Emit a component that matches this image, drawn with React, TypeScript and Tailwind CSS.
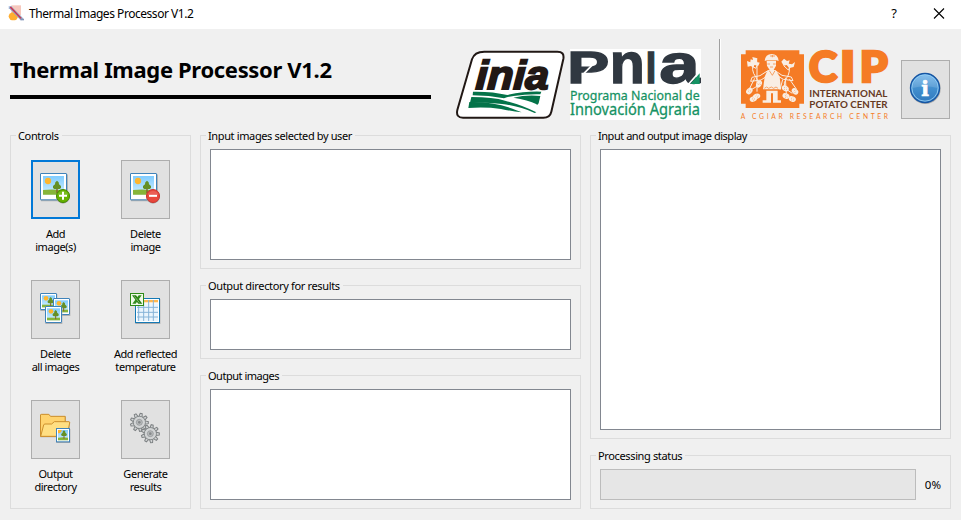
import type { ReactNode } from "react";

const UI = "font-['Noto_Sans','DejaVu_Sans',sans-serif]";

function Group({ title, tracking, className, children }: { title: string; tracking: string; className: string; children: ReactNode }) {
  return (
    <section className={`flex flex-col border border-[#dcdcdc] ${className}`}>
      <h2 className={`-mt-[7px] ml-[5px] h-[13px] self-start whitespace-nowrap bg-[#f0f0f0] pl-[2px] pr-[3px] text-[11px] leading-[13px] ${tracking}`}>{title}</h2>
      {children}
    </section>
  );
}

function ListBox() {
  return <div className="mx-[9px] mb-2 mt-[7px] flex-1 border border-[#828790] bg-white" />;
}

function IconButton({ focused, children }: { focused?: boolean; children: ReactNode }) {
  return (
    <button className={`block h-[59px] w-[49px] shrink-0 bg-[#e1e1e1] ${focused ? "shadow-[inset_0_0_0_2px_#0078d7]" : "shadow-[inset_0_0_0_1px_#adadad]"}`}>
      <svg width="49" height="59" viewBox="0 0 147 177">{children}</svg>
    </button>
  );
}

function Control({ lines, focused, children }: { lines: [string, string]; focused?: boolean; children: ReactNode }) {
  return (
    <div className="flex h-[120px] flex-col items-center">
      <IconButton focused={focused}>{children}</IconButton>
      <div className="mt-2 whitespace-nowrap text-center text-[11px] leading-[13px] tracking-[-0.45px]">
        {lines[0]}
        <br />
        {lines[1]}
      </div>
    </div>
  );
}

function Tree({ x, y, s }: { x: number; y: number; s: number }) {
  return (
    <g transform={`translate(${x} ${y}) scale(${s})`}>
      <path d="M-2 8h4v17h-4z" fill="#855b2c" />
      <path d="M0-12l5 5 1 6 6 5v6l-4 3H-8l-4-3V4l6-5 1-6z" fill="#659026" />
    </g>
  );
}

function Photo() {
  return (
    <g>
      <rect x="30" y="43" width="81" height="81" rx="2" fill="#b3b3b3" />
      <rect x="28.500" y="40.500" width="78" height="79" rx="1" fill="#fff" stroke="#3f83ba" strokeWidth="3" />
      <rect x="36" y="48" width="63" height="56" fill="url(#sky)" />
      <path d="M36 90q30-3 63 1v13H36z" fill="#86b53a" />
      <circle cx="51" cy="63" r="9.500" fill="#ffb62e" />
      <Tree x={78} y={74} s={1} />
    </g>
  );
}

function MiniPhoto({ x, y }: { x: number; y: number }) {
  return (
    <g transform={`translate(${x} ${y})`}>
      <rect x="1" y="3" width="51" height="51" fill="#b0b0b0" />
      <rect x="1.500" y="1.500" width="48" height="48" rx="1" fill="#fff" stroke="#3f83ba" strokeWidth="3" />
      <rect x="6" y="7" width="39" height="36" fill="url(#sky)" />
      <path d="M6 35h39v8H6z" fill="#86b53a" />
      <circle cx="18" cy="16" r="7" fill="#ffb62e" />
      <Tree x={32} y={21} s={0.75} />
    </g>
  );
}

function Badge({ kind }: { kind: "add" | "remove" }) {
  const add = kind === "add";
  return (
    <g>
      <circle cx="96" cy="110" r="21" fill="#aaa" />
      <circle cx="96" cy="108" r="19.500" fill={add ? "#66b200" : "#e8473c"} stroke={add ? "#448900" : "#cb342e"} strokeWidth="3" />
      <path d="M80 104a17 17 0 0 1 32 0q-16 8-32 0" fill="#fff" opacity=".13" />
      <path d={add ? "M84 107.500h24M96 95.500v24" : "M84 107.500h24"} stroke="#fff" strokeWidth="6" />
    </g>
  );
}

function Gear({ x, y }: { x: number; y: number }) {
  const angles = [0, 40, 80, 120, 160, 200, 240, 280, 320];
  return (
    <g transform={`translate(${x} ${y})`}>
      {angles.map((a) => (
        <path key={a} d="M-5-17L-3-27h6l2 10z" transform={`rotate(${a + 12})`} fill="#d2d4d5" stroke="#7d8183" strokeWidth="3" />
      ))}
      <circle r="18" fill="#d2d4d5" stroke="#808486" strokeWidth="2.500" />
      <circle r="16" fill="#d2d4d5" />
      <circle r="9" fill="#b7babb" stroke="#8c9092" strokeWidth="2" />
      <circle r="4" fill="#85888a" />
    </g>
  );
}

function Sheet() {
  return (
    <g>
      <rect x="43" y="57" width="75" height="75" fill="#aaa" />
      <rect x="43.500" y="55.500" width="72" height="72" fill="#fff" stroke="#1479b5" strokeWidth="3" />
      <rect x="48" y="60" width="63" height="7" fill="#ffb851" />
      <rect x="48" y="70" width="63" height="53" fill="#eaf5fd" />
      <path d="M53 60v63M68 60v63M83 60v63M97 60v63M48 82h63M48 97h63M48 111h63" stroke="#86b4d8" strokeWidth="3" />
      <rect x="28.500" y="40.500" width="39" height="36" fill="#f0fae9" stroke="#2e8b16" strokeWidth="3" />
      <path d="M33 46h12l19 25H52z" fill="#287d12" />
      <path d="M62 46h-9L34 71h10z" fill="#328c1c" />
      <path d="M40 49l15 19" stroke="#a9d69c" strokeWidth="2" />
    </g>
  );
}

function Folder() {
  return (
    <g>
      <path d="M28 112V45q0-2 3-2h23l4 6h45q2 0 2 3v14h11v46z" fill="#b5b1a8" />
      <path d="M28.500 109V45q0-2 3-2h22l5 6h44v60z" fill="#ffd36e" stroke="#cc8f2d" strokeWidth="3" />
      <path d="M29 109l9-34q1-3 4-3h20l8-7h44q3 0 2 4l-8 40z" fill="#ffdf83" stroke="#cc8f2d" strokeWidth="3" />
      <rect x="76" y="87" width="42" height="42" fill="#aaa" />
      <rect x="76.500" y="85.500" width="39" height="40" fill="#fff" stroke="#3f83ba" strokeWidth="3" />
      <rect x="81" y="90" width="30" height="31" fill="url(#sky)" />
      <path d="M81 113q15-3 30 0v8H81z" fill="#86b53a" />
      <path d="M81 90h11q0 10-11 10z" fill="#ffb62e" />
      <Tree x={99} y={99} s={0.7} />
    </g>
  );
}

function AppIcon() {
  return (
    <svg className="ml-2 mt-[5px]" width="16" height="16" viewBox="0 0 48 48">
      <path d="M10 1h29v30H10z" fill="#f6c8bd" />
      <path d="M2 3h9v9H2z" fill="#b8c8e7" />
      <ellipse cx="16" cy="34" rx="14" ry="12" fill="#ffae32" />
      <path d="M6 6l36 37" stroke="#91a5c2" strokeWidth="9" />
      <path d="M7 6l32 34" stroke="#d52b49" strokeWidth="4" />
      <path d="M38 41h10v5H38z" fill="#8294b8" />
    </svg>
  );
}

function IniaLogo() {
  return (
    <svg className="ml-6 mt-[21px] shrink-0 overflow-visible" width="110" height="70" viewBox="15 30 330 210">
      <path d="M103 35H322q22 0 18 22L304 215q-4 18-24 18H39q-22 0-17-23L66 58q7-23 37-23z" fill="#fff" stroke="#211815" strokeWidth="6" />
      <text transform="translate(76 146) skewX(-3)" fontFamily="Liberation Sans, sans-serif" fontWeight="700" fontStyle="italic" fontSize="121" textLength="219" lengthAdjust="spacingAndGlyphs" fill="#211815" stroke="#211815" strokeWidth="6">inia</text>
      <path d="M69 155q58-1 103 10 55-12 102-10l-3 8q-42-1-80 5-16 2-29 7-45-9-94-9z" fill="#047349" />
      <path d="M64 171q66 0 101 11 55 14 94 35l-5 2q-46-21-98-27-45-6-96-4z" fill="#047349" />
      <path d="M58 186q77-2 139 24l18 7q-28-3-62-10-47-7-98-3z" fill="#047349" />
      <path d="M190 173q38-9 81-5l-5 22q-6 8-6 3-26-14-70-20z" fill="#047349" />
    </svg>
  );
}

function PniaLogo() {
  const letters = { fontFamily: "Liberation Sans, sans-serif", fontWeight: 700, fill: "#303841", stroke: "#303841", strokeWidth: 4 };
  return (
    <svg className="ml-[5px] mt-5 shrink-0 overflow-visible" width="131" height="72" viewBox="30 27 393 216">
      <path d="M30 27h393v213H30z" fill="#fff" />
      <text {...letters} transform="translate(22 130) scale(1.420 1)" fontSize="133">P</text>
      <text {...letters} transform="translate(149 130) scale(1 1)" fontSize="172">n</text>
      <text {...letters} transform="translate(257 130) scale(.85 1)" fontSize="133">I</text>
      <text {...letters} transform="translate(298 128) scale(1.330 1)" fontSize="164">a</text>
      <path d="M72 100l26-26M386 132l36-40" stroke="#fff" strokeWidth="5" />
      <path d="M391 132l28-32v32z" fill="#159263" />
      <g fontFamily="Noto Sans, sans-serif" fill="#159263" stroke="#159263" strokeWidth=".8">
        <text x="30" y="181" fontSize="40" textLength="389" lengthAdjust="spacingAndGlyphs">Programa Nacional de</text>
        <text x="30" y="225" fontSize="46" textLength="390" lengthAdjust="spacingAndGlyphs">Innovación Agraria</text>
      </g>
    </svg>
  );
}

function Potato({ x, y, r }: { x: number; y: number; r: number }) {
  return (
    <g transform={`translate(${x} ${y}) rotate(${r})`}>
      <ellipse rx="11" ry="8" fill="#f9eee4" />
      <path d="M-4-1h2M3 1h2M0-4h1M-1 4h2" stroke="#f57b25" strokeWidth="2" />
    </g>
  );
}

function CipLogo() {
  return (
    <svg className="ml-[19px] mt-[21px] shrink-0 overflow-visible" width="150" height="70" viewBox="30 30 450 210">
      <path d="M47 31h161v12h14v148h-14v13H47v-13H33V43h14z" fill="#f57b25" />
      <g fill="#f9eee4">
        <path d="M104 63q2-21 21-21t21 21l-7-2h-28z" />
        <path d="M110 62h28v15l-7 13h-12l-8-13z" />
        <path d="M113 90h24l12 20 4 38H99l5-38z" />
        <path d="M109 152h34v29h10v7h-24v-28h-6v28H98v-7h11z" />
        <path d="M51 63l10 4 1-9 7 2-2-9 15 4-1 12 8 1-4 9-12-2-3 9-7-6-10 2zM154 65l8-9 9 7 8-2-3 10 10 2 9-7-4 15-13 3-8-9-9 2z" />
      </g>
      <g fill="none" stroke="#f9eee4" strokeWidth="3">
        <path d="M112 93L90 107l-24 5-4 12 31-4 20-13M137 93l19 13 28 5 5 11-29-4-20-12M73 68q-13 20 5 44T65 148M81 65v90M61 74l16 11 9-17M174 70q11 23-6 47t19 43M184 76l-9 14-14-13M74 115l-17 34M166 113l3 50M178 117l21 30M91 120l-7 23M158 119l-8 30" />
      </g>
      <g stroke="#f57b25" strokeWidth="2">
        <path d="M112 72h8M129 72h8M120 81h9" />
        <path d="M118 92l9 14 8-14M103 145l7-4 6 4 8-4 7 4 7-4 6 4" fill="none" />
        <path d="M127 45v7M120 48h15" />
      </g>
      <Potato x={87} y={132} r={-60} />
      <Potato x={58} y={153} r={-45} />
      <Potato x={80} y={169} r={-20} />
      <Potato x={70} y={177} r={-20} />
      <Potato x={166} y={145} r={30} />
      <Potato x={195} y={154} r={40} />
      <Potato x={168} y={168} r={25} />
      <Potato x={187} y={177} r={25} />
      <g fontFamily="Lato, sans-serif" fontWeight="900" fontSize="128" fill="#f57b25" stroke="#f57b25" strokeWidth="8">
        <text x="237" y="127" textLength="84" lengthAdjust="spacingAndGlyphs">C</text>
        <text x="330" y="127" textLength="46" lengthAdjust="spacingAndGlyphs">I</text>
        <text x="389" y="127" textLength="84" lengthAdjust="spacingAndGlyphs">P</text>
      </g>
      <g fontFamily="Lato, sans-serif" fontWeight="700" fill="#66391e">
        <text x="238" y="170" fontSize="29" textLength="234" lengthAdjust="spacingAndGlyphs">INTERNATIONAL</text>
        <text x="238" y="203" fontSize="29" textLength="235" lengthAdjust="spacingAndGlyphs">POTATO CENTER</text>
      </g>
      <text x="32" y="237" fontFamily="Lato, sans-serif" fontSize="20" textLength="442" fill="#f57b25">A CGIAR RESEARCH CENTER</text>
    </svg>
  );
}

export default function App() {
  return (
    <div className={`flex h-[520px] w-[961px] flex-col overflow-hidden bg-[#f0f0f0] text-black ${UI}`}>
      <svg className="h-0 w-0 shrink-0" aria-hidden="true">
        <defs>
          <linearGradient id="sky" x1="0" y1="0" x2="0" y2="1">
            <stop stopColor="#80ccff" />
            <stop offset="1" stopColor="#d2f0ff" />
          </linearGradient>
          <linearGradient id="info" x1="0" y1="0" x2="0" y2="1">
            <stop stopColor="#79b9ec" />
            <stop offset=".5" stopColor="#438fce" />
            <stop offset="1" stopColor="#3179be" />
          </linearGradient>
        </defs>
      </svg>
      <header className="flex h-[29px] shrink-0 bg-white">
        <AppIcon />
        <span className="ml-[5px] whitespace-nowrap text-[12px] leading-[27px] tracking-[-0.46px]">Thermal Images Processor V1.2</span>
        <span className="ml-auto mr-9 text-[13px] leading-[27px]">?</span>
        <svg className="mr-4 mt-2" width="12" height="12" viewBox="0 0 12 12">
          <path d="M1 .5l10 10M11 .5l-10 10" stroke="#000" strokeWidth="1.100" />
        </svg>
      </header>
      <div className="flex h-[106px] shrink-0 pl-[10px]">
        <div className="w-[421px] shrink-0">
          <h1 className="mt-[26px] h-10 whitespace-nowrap text-[22px] font-bold leading-[28px] tracking-[-0.34px]">Thermal Image Processor V1.2</h1>
          <div className="h-1 bg-black" />
        </div>
        <IniaLogo />
        <PniaLogo />
        <div className="ml-[18px] mt-[10px] h-[81px] w-[2px] shrink-0 border-l border-[#a0a0a0] bg-white" />
        <CipLogo />
        <div className="ml-[11px] mt-[31px]">
          <IconButton>
            <circle cx="73" cy="86" r="46" fill="#a9a9a9" />
            <circle cx="72" cy="84" r="43.500" fill="url(#info)" stroke="#1656a4" strokeWidth="4" />
            <circle cx="72" cy="84" r="39.500" fill="none" stroke="#9bd3f7" strokeWidth="2.500" />
            <path d="M35 84a37 37 0 0 1 74 0q-35-10-74 0" fill="#fff" opacity=".14" />
            <text x="72" y="107" textAnchor="middle" fontFamily="DejaVu Serif, serif" fontWeight="700" fontSize="61" fill="#fff" stroke="#fff" strokeWidth="2">i</text>
          </IconButton>
        </div>
      </div>
      <main className="flex h-[374px] shrink-0 gap-[9px] pl-[10px]">
        <Group title="Controls" tracking="tracking-[-0.35px]" className="w-[181px]">
          <div className="mt-[18px] grid grid-cols-[89px_89px] gap-x-px">
            <Control lines={["Add", "image(s)"]} focused><Photo /><Badge kind="add" /></Control>
            <Control lines={["Delete", "image"]}><Photo /><Badge kind="remove" /></Control>
            <Control lines={["Delete", "all images"]}><MiniPhoto x={27} y={39} /><MiniPhoto x={66} y={54} /><MiniPhoto x={42} y={78} /></Control>
            <Control lines={["Add reflected", "temperature"]}><Sheet /></Control>
            <Control lines={["Output", "directory"]}><Folder /></Control>
            <Control lines={["Generate", "results"]}><Gear x={55} y={67} /><Gear x={88} y={101} /></Control>
          </div>
        </Group>
        <div className="flex w-[381px] flex-col gap-4">
          <Group title="Input images selected by user" tracking="tracking-[-0.37px]" className="h-[134px]"><ListBox /></Group>
          <Group title="Output directory for results" tracking="tracking-[-0.34px]" className="h-[74px]"><ListBox /></Group>
          <Group title="Output images" tracking="tracking-[-0.48px]" className="h-[134px]"><ListBox /></Group>
        </div>
        <div className="flex w-[361px] flex-col gap-4">
          <Group title="Input and output image display" tracking="tracking-[-0.46px]" className="h-[304px]"><ListBox /></Group>
          <Group title="Processing status" tracking="tracking-[-0.36px]" className="h-[54px]">
            <div className="mx-[9px] mt-[7px] flex h-[31px] items-center justify-between">
              <div className="h-[31px] w-[316px] border border-[#bcbcbc] bg-[#e6e6e6]" />
              <span className="text-[11.5px] leading-[13px]">0%</span>
            </div>
          </Group>
        </div>
      </main>
    </div>
  );
}
